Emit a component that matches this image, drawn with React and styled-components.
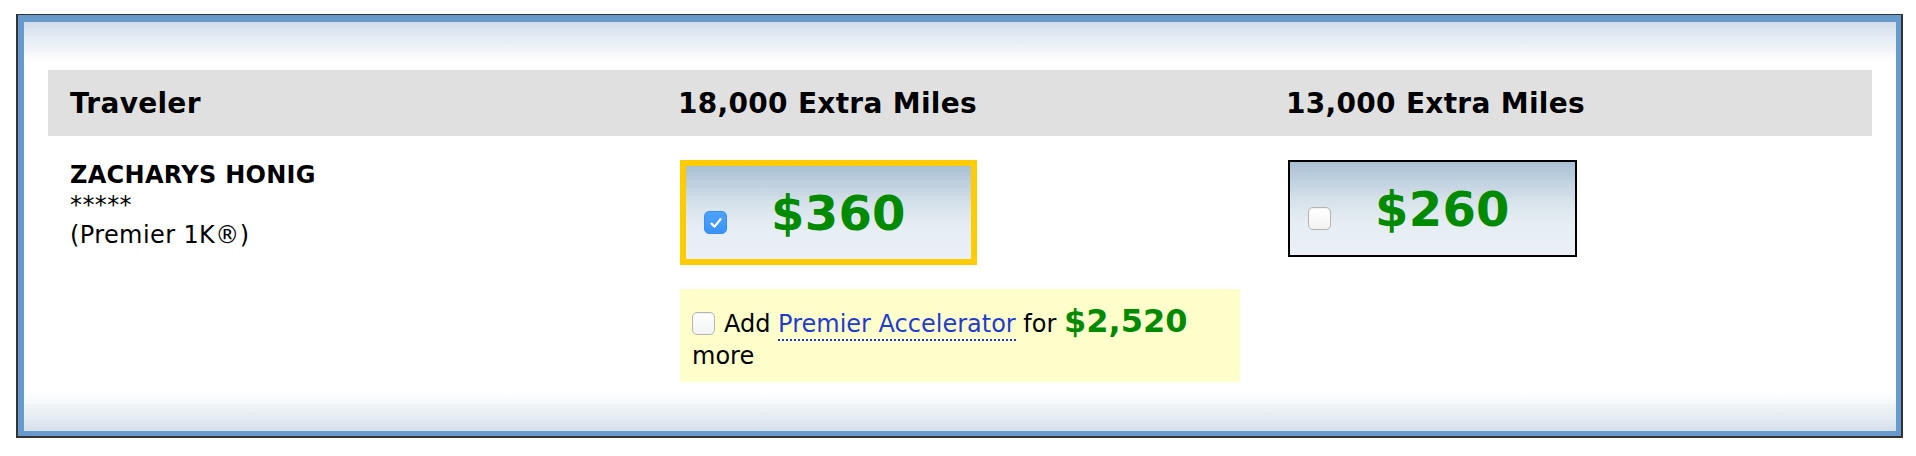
import React, { useState } from "react";
import styled, { createGlobalStyle } from "styled-components";

const GlobalStyle = createGlobalStyle`
  html, body {
    margin: 0;
    padding: 0;
    background: #fff;
  }
  body {
    font-family: "DejaVu Sans", Verdana, sans-serif;
    color: #000;
  }
`;

const fares = [
  { id: "18k", miles: "18,000 Extra Miles", price: "$360" },
  { id: "13k", miles: "13,000 Extra Miles", price: "$260" },
];

const CheckMark = () => (
  <svg width="14" height="14" viewBox="0 0 14 14">
    <path
      d="M2.5 7.6 L5.6 10.6 L11.5 3.2"
      fill="none"
      stroke="#fff"
      strokeWidth="2.2"
      strokeLinecap="round"
      strokeLinejoin="round"
    />
  </svg>
);

const Checkbox = ({ checked, onClick, className }) => (
  <CheckBoxBase
    role="checkbox"
    aria-checked={checked}
    $checked={checked}
    onClick={onClick}
    className={className}
  >
    {checked && <CheckMark />}
  </CheckBoxBase>
);

const App = () => {
  const [selected, setSelected] = useState("18k");
  const [accelerator, setAccelerator] = useState(false);

  return (
    <>
      <GlobalStyle />
      <Frame>
        <Panel>
          <HeaderRow>
            <HeaderCell>Traveler</HeaderCell>
            {fares.map((fare) => (
              <HeaderCell key={fare.id}>{fare.miles}</HeaderCell>
            ))}
          </HeaderRow>
          <BodyRow>
            <Cell>
              <TravelerName>ZACHARYS HONIG</TravelerName>
              <TravelerLine>*****</TravelerLine>
              <TravelerLine>(Premier 1K®)</TravelerLine>
            </Cell>
            {fares.map((fare) => {
              const isSelected = selected === fare.id;
              return (
                <Cell key={fare.id}>
                  <FareBox
                    $selected={isSelected}
                    onClick={() => setSelected(isSelected ? "" : fare.id)}
                  >
                    <FareCheck checked={isSelected} />
                    <FarePrice>{fare.price}</FarePrice>
                  </FareBox>
                  {fare.id === "18k" && (
                    <Accelerator>
                      <AccelCheck
                        checked={accelerator}
                        onClick={() => setAccelerator(!accelerator)}
                      />
                      Add <AccelLink href="#">Premier Accelerator</AccelLink>{" "}
                      for <AccelPrice>$2,520</AccelPrice> more
                    </Accelerator>
                  )}
                </Cell>
              );
            })}
          </BodyRow>
        </Panel>
      </Frame>
    </>
  );
};

export default App;

const Frame = styled.div`
  margin: 14px 13px 0 16px;
  border: 2px solid #333;
  border-top-width: 1px;
`;

const Panel = styled.div`
  border: 5px solid #6699cc;
  border-top-width: 7px;
  border-left-width: 6px;
  padding: 48px 24px 49px 24px;
  background: linear-gradient(
    to bottom,
    #d3deeb 0px,
    #ffffff 40px,
    #ffffff calc(100% - 38px),
    #d5e0eb 100%
  );
`;

const HeaderRow = styled.div`
  display: grid;
  grid-template-columns: repeat(3, 1fr);
  align-items: center;
  height: 66px;
  background-color: #e0e0e0;
`;

const HeaderCell = styled.div`
  padding: 0 22px;
  font-size: 28px;
  font-weight: bold;
  letter-spacing: 0.3px;
`;

const BodyRow = styled.div`
  display: grid;
  grid-template-columns: repeat(3, 1fr);
  align-items: start;
  padding-top: 24px;
`;

const Cell = styled.div`
  padding: 0 22px;
  display: flex;
  flex-direction: column;
  align-items: flex-start;
`;

const TravelerName = styled.div`
  font-size: 24px;
  font-weight: bold;
  line-height: 30px;
  letter-spacing: 0.3px;
`;

const TravelerLine = styled.div`
  font-size: 24px;
  line-height: 30px;
  letter-spacing: 0.4px;
`;

const CheckBoxBase = styled.span`
  display: inline-flex;
  align-items: center;
  justify-content: center;
  box-sizing: border-box;
  width: 23px;
  height: 23px;
  border-radius: 5px;
  cursor: pointer;
  flex-shrink: 0;
  border: 1px solid ${(props) => (props.$checked ? "#3a8ef0" : "#b4b4b4")};
  background: ${(props) =>
    props.$checked
      ? "linear-gradient(to bottom, #4ca2fd, #3b93f7)"
      : "linear-gradient(to bottom, #ffffff, #f3f3f3)"};
  box-shadow: ${(props) =>
    props.$checked ? "none" : "inset 0 1px 1px rgba(0,0,0,0.06)"};
`;

const FareBox = styled.div`
  display: flex;
  align-items: center;
  width: 267px;
  height: 93px;
  margin-left: 2px;
  padding-left: 18px;
  cursor: pointer;
  border: ${(props) =>
    props.$selected ? "6px solid #ffcc00" : "2px solid #000"};
  background: linear-gradient(
    to bottom,
    #a9c0d4 0%,
    #d6e1ea 40%,
    #e6eef3 65%,
    #eaf0f5 100%
  );
`;

const FareCheck = styled(Checkbox)`
  margin-top: 20px;
`;

const FarePrice = styled.span`
  margin-left: 44px;
  font-size: 48px;
  font-weight: bold;
  letter-spacing: 0.3px;
  color: #008a00;
`;

const Accelerator = styled.div`
  box-sizing: border-box;
  width: 560px;
  margin: 24px 0 0 2px;
  padding: 16px 12px 10px 12px;
  background-color: #ffffcc;
  font-size: 24px;
  line-height: 32px;
`;

const AccelCheck = styled(Checkbox)`
  vertical-align: -3px;
  margin-right: 9px;
`;

const AccelLink = styled.a`
  color: #1f3ccf;
  text-decoration: none;
  border-bottom: 2px dotted #1f3ccf;
  padding-bottom: 1px;
`;

const AccelPrice = styled.span`
  font-size: 32px;
  font-weight: bold;
  color: #008a00;
`;
